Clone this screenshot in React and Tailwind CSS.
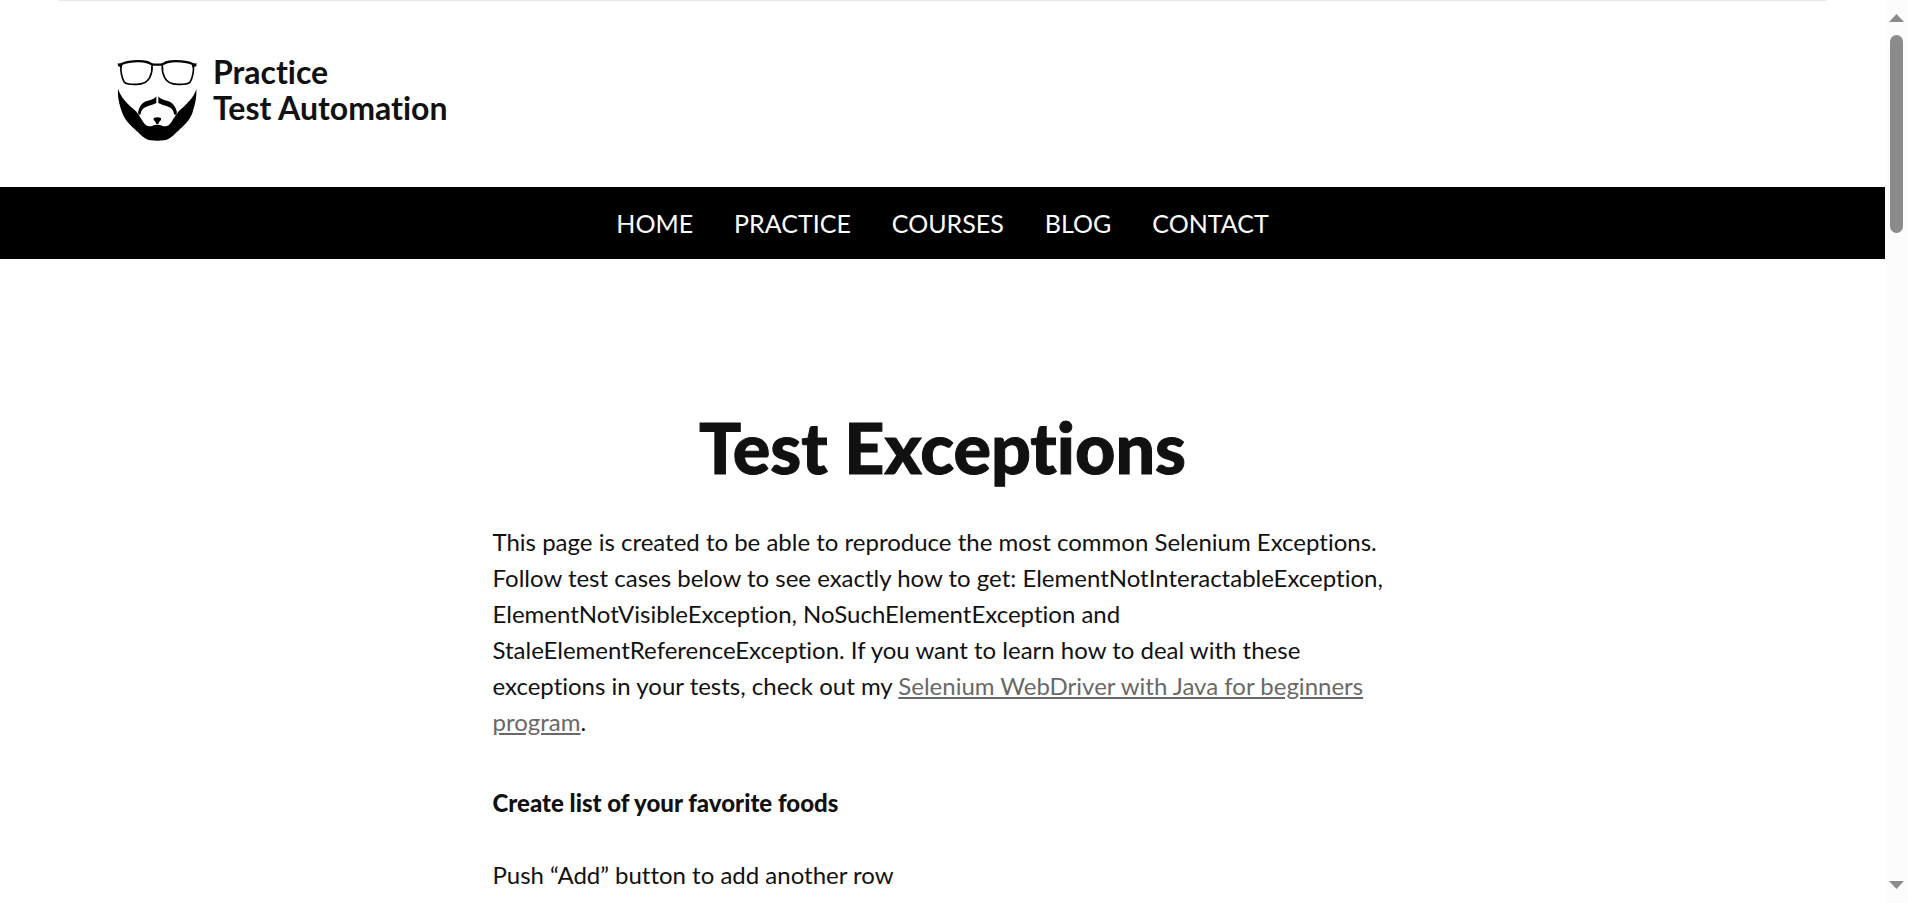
const navItems = ["Home", "Practice", "Courses", "Blog", "Contact"];

function BeardLogo() {
  return (
    <svg viewBox="48 36 246 258" className="h-[86px] w-[82px] shrink-0" aria-hidden="true">
      <g fill="none" stroke="#000" strokeLinejoin="round" strokeLinecap="round">
        <path d="M63 62C61 78 66 100 72 110C78 119 92 118 110 118C132 118 142 112 149 98C156 84 157 74 156 62" strokeWidth="5" />
        <path d="M280 62C282 78 277 100 271 110C265 119 251 118 233 118C211 118 201 112 194 98C187 84 186 74 187 62" strokeWidth="5" />
        <path d="M58 60C80 48 120 46 140 51C150 53 154 60 163 59H180C189 60 193 53 203 51C223 46 263 48 285 60" strokeWidth="7" />
      </g>
      <path d="M53 55L68 58L65 68L54 63Z M290 55L275 58L278 68L289 63Z" />
      <path d="M54 132C60 150 72 166 86 179C94 187 103 193 108 199C114 207 119 214 124 222C131 233 136 243 147 244C157 245 162 238 172 239C182 238 187 245 197 244C208 243 213 233 220 222C225 214 230 207 236 199C241 193 250 187 257 179C271 166 284 150 289 132C291 161 282 188 277 204C270 225 251 243 235 257C220 270 211 283 192 286C179 288 165 288 152 286C133 283 124 270 109 257C93 243 74 225 67 204C61 188 52 161 54 132Z" />
      <path d="M169 154V174C161 179 149 181 139 185C126 190 124 197 121 209C116 211 113 206 115 198C118 188 122 179 132 172C142 166 162 165 169 154Z M175 154V174C183 179 195 181 205 185C218 190 220 197 223 209C228 211 232 206 230 198C227 188 222 179 212 172C202 166 182 165 175 154Z" />
      <path d="M161 219C167 216 177 216 183 219V226C179 228 177 232 175 237H169C167 232 165 228 161 226Z" />
    </svg>
  );
}

function ScrollBar() {
  return (
    <div className="sticky top-0 flex h-screen w-[23px] shrink-0 flex-col items-center bg-[#fcfcfc] py-3.5" aria-hidden="true">
      <svg viewBox="0 0 15 8" className="h-2 w-[15px]" fill="#8b8b8b"><path d="M7.5 0L15 8H0Z" /></svg>
      <div className="mt-[13px] h-[198px] w-[13px] rounded-full bg-[#8b8b8b]" />
      <svg viewBox="0 0 15 8" className="mt-auto h-2 w-[15px]" fill="#8b8b8b"><path d="M0 0H15L7.5 8Z" /></svg>
    </div>
  );
}

export default function App() {
  return (
    <div className="flex min-h-screen bg-white font-['Lato',sans-serif] text-2xl leading-9 text-[#111] [font-variant-ligatures:none]">
      <div className="min-w-0 flex-1">
        <div className="mx-[59px] border-t border-[#e6e6e6]" />
        <header className="px-[116px] pt-14 pb-11">
          <a href="#home" className="inline-flex gap-[15px] align-top">
            <BeardLogo />
            <span className="-mt-[3px] text-[32px] leading-9 font-bold">
              Practice
              <br />
              Test Automation
            </span>
          </a>
        </header>
        <nav className="bg-black text-white">
          <ul className="flex justify-center gap-[41px] py-[18px] text-[25px] leading-9 uppercase">
            {navItems.map((item) => (
              <li key={item}>
                <a href={"#" + item.toLowerCase()}>{item}</a>
              </li>
            ))}
          </ul>
        </nav>
        <main className="mx-auto max-w-[900px] pt-[146px]">
          <h1 className="text-center text-[70px] leading-[84px] font-black [-webkit-text-stroke:1px_#111]">Test Exceptions</h1>
          <p className="mt-[35px]">
            This page is created to be able to reproduce the most common Selenium Exceptions. Follow test cases below to see
            exactly how to get: ElementNotInteractableException, ElementNotVisibleException, NoSuchElementException and
            StaleElementReferenceException. If you want to learn how to deal with these exceptions in your tests, check out my{" "}
            <a href="#program" className="text-[#686868] underline">
              Selenium WebDriver with Java for beginners program
            </a>
            .
          </p>
          <h5 className="mt-[45px] font-black">Create list of your favorite foods</h5>
          <p className="mt-9">Push “Add” button to add another row</p>
        </main>
      </div>
      <ScrollBar />
    </div>
  );
}
